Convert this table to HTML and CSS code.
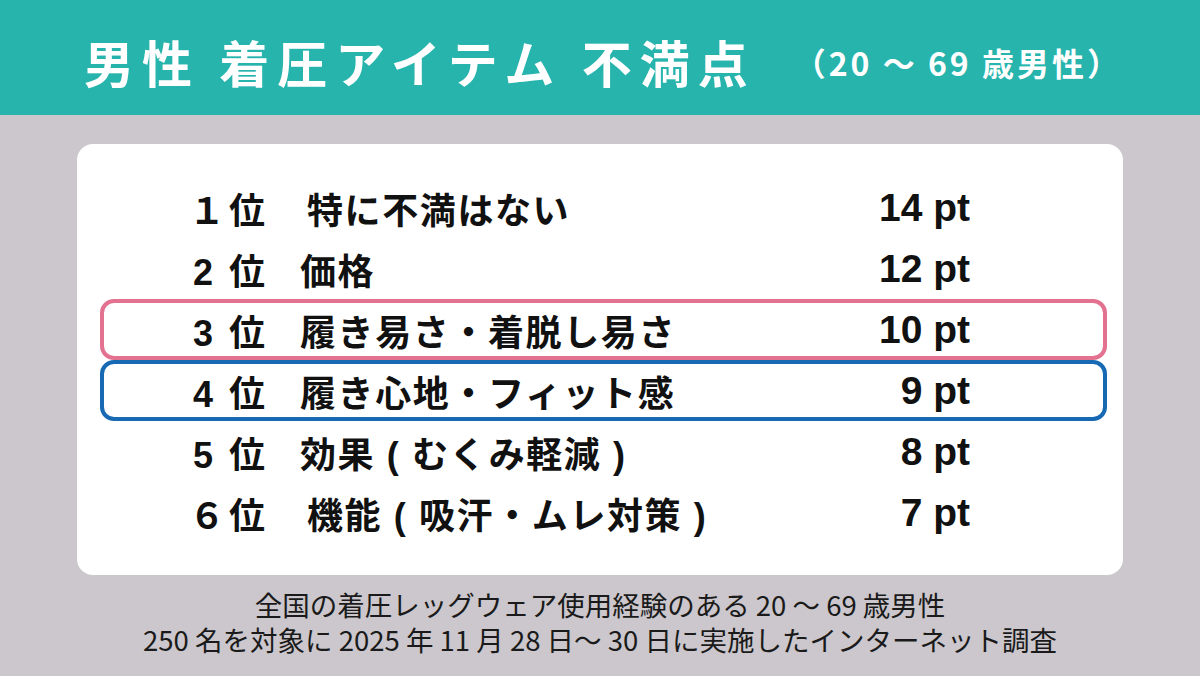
FILE: index.html
```html
<!DOCTYPE html>
<html lang="ja">
<head>
<meta charset="utf-8">
<title>男性 着圧アイテム 不満点</title>
<link rel="stylesheet" href="styles.css">
</head>
<body>
<header class="header">
  <h1 class="title">男性 着圧アイテム 不満点</h1>
  <span class="subtitle">（20 ～ 69 歳男性）</span>
</header>
<main class="main">
  <section class="card">
    <div class="row">
      <span class="rank">１位</span><span class="label label--wide">特に不満はない</span><span class="value">14 pt</span>
    </div>
    <div class="row">
      <span class="rank">2 位</span><span class="label">価格</span><span class="value">12 pt</span>
    </div>
    <div class="row row--pink">
      <span class="rank">3 位</span><span class="label">履き易さ・着脱し易さ</span><span class="value">10 pt</span>
    </div>
    <div class="row row--blue">
      <span class="rank">4 位</span><span class="label">履き心地・フィット感</span><span class="value">9 pt</span>
    </div>
    <div class="row">
      <span class="rank">5 位</span><span class="label">効果 ( むくみ軽減 )</span><span class="value">8 pt</span>
    </div>
    <div class="row">
      <span class="rank">６位</span><span class="label label--wide">機能 ( 吸汗・ムレ対策 )</span><span class="value">7 pt</span>
    </div>
  </section>
  <footer class="note">
    <p>全国の着圧レッグウェア使用経験のある 20 ～ 69 歳男性</p>
    <p>250 名を対象に 2025 年 11 月 28 日～ 30 日に実施したインターネット調査</p>
  </footer>
</main>
</body>
</html>
```

FILE: styles.css
```css
html, body {
  margin: 0;
  padding: 0;
}
body {
  width: 1200px;
  height: 676px;
  overflow: hidden;
  background: #cbc7cc;
  font-family: "Liberation Sans", "Noto Sans CJK JP", sans-serif;
  color: #111;
}
.header {
  height: 115px;
  background: #26b4ad;
  display: flex;
  align-items: center;
  padding: 6px 0 0 84px;
  box-sizing: border-box;
  color: #fff;
  font-family: "Noto Sans CJK JP", sans-serif;
}
.title {
  margin: 0;
  font-size: 50px;
  font-weight: 700;
  letter-spacing: 8px;
  line-height: 1;
}
.subtitle {
  margin-left: 38px;
  font-size: 32px;
  font-weight: 700;
  letter-spacing: 3px;
  line-height: 1;
  padding-top: 2px;
}
.main {
  padding-top: 29px;
}
.card {
  margin: 0 77px;
  background: #fff;
  border-radius: 16px;
  padding: 33px 16px 32px 23px;
}
.row {
  height: 61px;
  box-sizing: border-box;
  border: 4px solid transparent;
  border-radius: 14px;
  display: flex;
  align-items: center;
  padding-right: 133px;
  font-size: 36px;
  font-weight: 700;
  letter-spacing: 1.6px;
}
.row--pink {
  border-color: #e2728f;
}
.row--blue {
  border-color: #1769b4;
}
.rank {
  width: 163px;
  text-align: right;
  letter-spacing: 2px;
}
.rank::first-letter {
  letter-spacing: 4px;
}
.label {
  margin-left: 33px;
  flex: 1;
  white-space: nowrap;
}
.label--wide {
  margin-left: 40px;
}
.value {
  font-size: 39px;
  letter-spacing: 0;
  text-align: right;
}
.note {
  margin-top: 12px;
  text-align: center;
  font-family: "Noto Sans CJK JP", sans-serif;
  font-size: 27.5px;
  line-height: 35px;
  color: #1a1a1a;
}
.note p {
  margin: 0;
}
```
